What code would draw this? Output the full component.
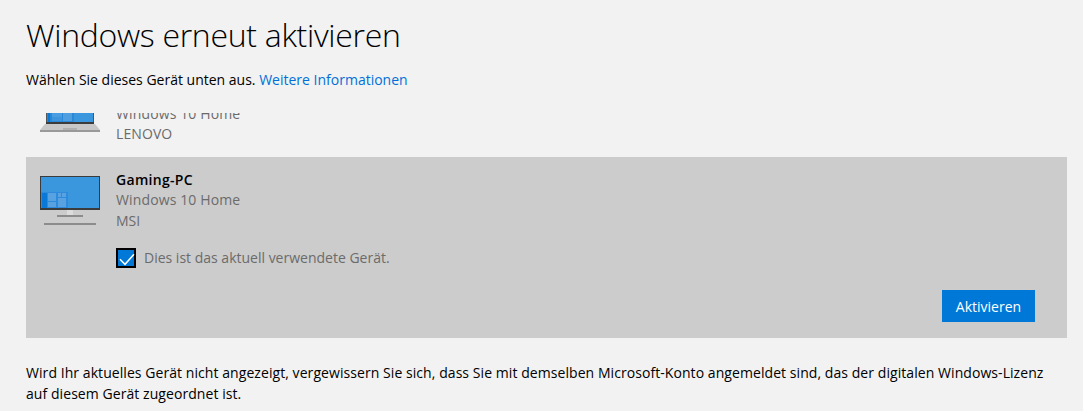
<script>
</script>

<main class="page">
  <h1>Windows erneut aktivieren</h1>
  <p class="intro">Wählen Sie dieses Gerät unten aus. <a href="#more">Weitere Informationen</a></p>

  <div class="list">
    <div class="row first">
      <svg class="icon" width="60" height="36" viewBox="0 0 60 36" aria-hidden="true">
        <rect x="6" y="0" width="48" height="26" fill="#3a96dd"/>
        <rect x="6" y="0" width="1" height="26" fill="#555"/>
        <rect x="53" y="0" width="1" height="26" fill="#555"/>
        <rect x="6" y="25" width="48" height="2" fill="#3c3c3c"/>
        <rect x="7" y="0" width="27" height="25" fill="#2a88d8"/>
        <rect x="8" y="0" width="2" height="25" fill="#0a78d7"/>
        <rect x="12" y="0" width="10" height="20" fill="#4a9de0"/>
        <rect x="12" y="20" width="10" height="4" fill="#3f95dd"/>
        <rect x="23" y="0" width="9" height="24" fill="#4f9fe0"/>
        <polygon points="5,27 55,27 60,33 0,33" fill="#c8c8c8"/>
        <rect x="0" y="33" width="60" height="2" fill="#999"/>
        <rect x="23" y="31" width="14" height="2" fill="#b0b0b0"/>
      </svg>
      <div class="info">
        <div class="os">Windows 10 Home</div>
        <div class="maker">LENOVO</div>
      </div>
    </div>

    <div class="row selected">
      <svg class="icon" width="60" height="50" viewBox="0 0 60 50" aria-hidden="true">
        <rect x="0" y="0" width="60" height="34" fill="#3b3b3b"/>
        <rect x="1" y="1" width="58" height="31" fill="#3a96dd"/>
        <rect x="1" y="16" width="27" height="16" fill="#2e8bdc"/>
        <rect x="2" y="17" width="5" height="15" fill="#0a78d7"/>
        <rect x="8" y="17" width="8" height="8" fill="#58a2e1"/>
        <rect x="8" y="26" width="8" height="5" fill="#58a2e1"/>
        <rect x="18" y="17" width="3" height="4" fill="#58a2e1"/>
        <rect x="22" y="17" width="4" height="4" fill="#58a2e1"/>
        <rect x="18" y="22" width="8" height="9" fill="#58a2e1"/>
        <rect x="27" y="34" width="6" height="5" fill="#dcdcdc"/>
        <rect x="17" y="39" width="26" height="2" fill="#8c8c8c"/>
        <rect x="4" y="47" width="52" height="2" fill="#8c8c8c"/>
      </svg>
      <div class="info">
        <div class="name">Gaming-PC</div>
        <div class="os">Windows 10 Home</div>
        <div class="maker">MSI</div>
        <label class="check">
          <span class="box">
            <svg width="16" height="16" viewBox="0 0 16 16" aria-hidden="true">
              <path d="M2 9.3 L7 14.3 L16 4.3" fill="none" stroke="#fff" stroke-width="1.5"/>
            </svg>
          </span>
          <span>Dies ist das aktuell verwendete Gerät.</span>
        </label>
      </div>
      <button class="activate" type="button">Aktivieren</button>
    </div>
  </div>

  <p class="footer">Wird Ihr aktuelles Gerät nicht angezeigt, vergewissern Sie sich, dass Sie mit demselben Microsoft-Konto angemeldet sind, das der digitalen Windows-Lizenz auf diesem Gerät zugeordnet ist.</p>
</main>

<style>
  :global(body) {
    margin: 0;
    background: #f2f2f2;
  }
  .page {
    box-sizing: border-box;
    height: 411px;
    padding: 0 16px 0 26px;
    overflow: hidden;
    font-family: "Open Sans", "Noto Sans", sans-serif;
    font-size: 14px;
    color: #000;
  }
  h1 {
    margin: 0;
    padding-top: 14px;
    font-size: 32px;
    line-height: 42px;
    font-weight: 300;
    letter-spacing: -0.3px;
    color: #000;
  }
  .intro {
    margin: 0;
    padding-top: 14px;
    line-height: 20px;
  }
  a {
    color: #0070d8;
    text-decoration: none;
  }
  .list {
    height: 225px;
    margin-top: 23px;
    overflow: hidden;
  }
  .row {
    display: flex;
    box-sizing: border-box;
  }
  .first {
    height: 44px;
    padding: 0 14px;
  }
  .icon {
    flex: none;
    display: block;
  }
  .selected {
    position: relative;
    height: 181px;
    background: #cccccc;
    padding: 19px 14px 0;
  }
  .info {
    margin-left: 16px;
    line-height: 21px;
  }
  .first .icon { margin-top: -16px; }
  .first .info { margin-top: -9px; line-height: 20px; letter-spacing: 0.1px; }
  .selected .info { margin-top: -8px; }
  .os { letter-spacing: 0.13px; }
  .name {
    font-weight: 600;
    letter-spacing: 0.3px;
    color: #000;
    position: relative;
    top: 1px;
  }
  .os, .maker, .check {
    color: #6b6b6b;
  }
  .check {
    display: flex;
    align-items: center;
    gap: 8px;
    margin-top: 16px;
  }
  .box {
    box-sizing: border-box;
    width: 20px;
    height: 20px;
    background: #0078d7;
    border: 2px solid #000;
    display: flex;
  }
  .box svg {
    display: block;
    overflow: visible;
  }
  .activate {
    position: absolute;
    right: 32px;
    bottom: 16px;
    width: 93px;
    height: 32px;
    border: 0;
    padding: 0;
    background: #0078d7;
    color: #fff;
    font: inherit;
  }
  .footer {
    margin: 0;
    padding-top: 24px;
    line-height: 21px;
    letter-spacing: 0.065px;
  }
</style>
